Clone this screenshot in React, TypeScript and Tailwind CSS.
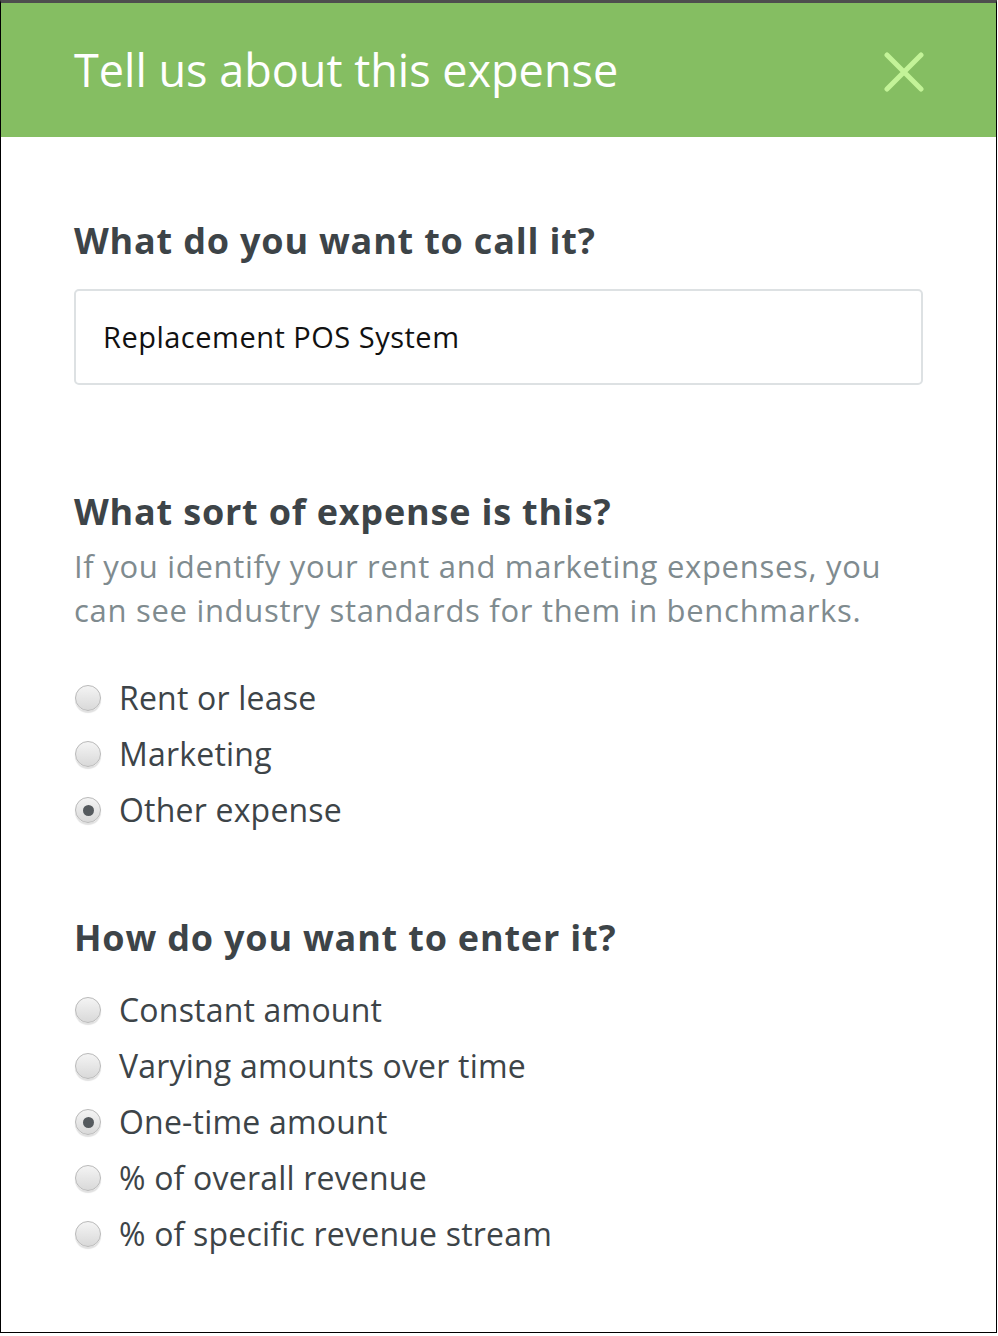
import React from "react";

function Radio({ checked }: { checked?: boolean }) {
  return (
    <span className="relative ml-px flex h-[26px] w-[26px] shrink-0 items-center justify-center rounded-full border border-[#b9b9b9] bg-gradient-to-b from-[#f4f4f4] to-[#d9d9d9] shadow-[0_2px_1px_rgba(0,0,0,0.12)]">
      {checked && <span className="h-[11px] w-[11px] rounded-full bg-[#555a5e]" />}
    </span>
  );
}

function Option({ label, checked }: { label: string; checked?: boolean }) {
  return (
    <div className="flex h-[56px] items-center gap-[18px]">
      <Radio checked={checked} />
      <span className="text-[32px] leading-[40px] tracking-[0.2px] text-[#3d4448]">{label}</span>
    </div>
  );
}

export default function App() {
  return (
    <div
      className="h-[1336px] w-[998px] bg-white"
      style={{ fontFamily: '"Open Sans", "Noto Sans", sans-serif' }}
    >
      <div className="h-[1333px] w-[997px] border-x border-b border-black border-t-[3px] border-t-[#4e4e4e] bg-white">
        <div className="flex h-[134px] items-center justify-between bg-[#85be62] pl-[73px] pr-[72px]">
          <h1 className="text-[45px] leading-[56px] text-white">Tell us about this expense</h1>
          <svg width="40" height="40" viewBox="0 0 40 40" className="mt-[4px]">
            <path d="M3 3 L37 37 M37 3 L3 37" stroke="#c3f398" strokeWidth="5" strokeLinecap="round" />
          </svg>
        </div>
        <div className="px-[73px]">
          <h2 className="mt-[84px] text-[36px] font-bold leading-[40px] tracking-[0.8px] text-[#3d4448]">What do you want to call it?</h2>
          <div className="mt-[28px] flex h-[96px] w-[849px] items-center rounded-[5px] border-2 border-[#dde1e3] pl-[27px] text-[29px] tracking-[0.5px] text-[#111]">
            Replacement POS System
          </div>
          <h2 className="mt-[107px] text-[36px] font-bold leading-[40px] tracking-[0.8px] text-[#3d4448]">What sort of expense is this?</h2>
          <p className="mt-[12px] text-[31px] leading-[44px] tracking-[0.7px] text-[#7f8b8f]">
            If you identify your rent and marketing expenses, you
            <br />
            can see industry standards for them in benchmarks.
          </p>
          <div className="mt-[38px]">
            <Option label="Rent or lease" />
            <Option label="Marketing" />
            <Option label="Other expense" checked />
          </div>
          <h2 className="mt-[80px] text-[36px] font-bold leading-[40px] tracking-[0.8px] text-[#3d4448]">How do you want to enter it?</h2>
          <div className="mt-[24px]">
            <Option label="Constant amount" />
            <Option label="Varying amounts over time" />
            <Option label="One-time amount" checked />
            <Option label="% of overall revenue" />
            <Option label="% of specific revenue stream" />
          </div>
        </div>
      </div>
    </div>
  );
}
